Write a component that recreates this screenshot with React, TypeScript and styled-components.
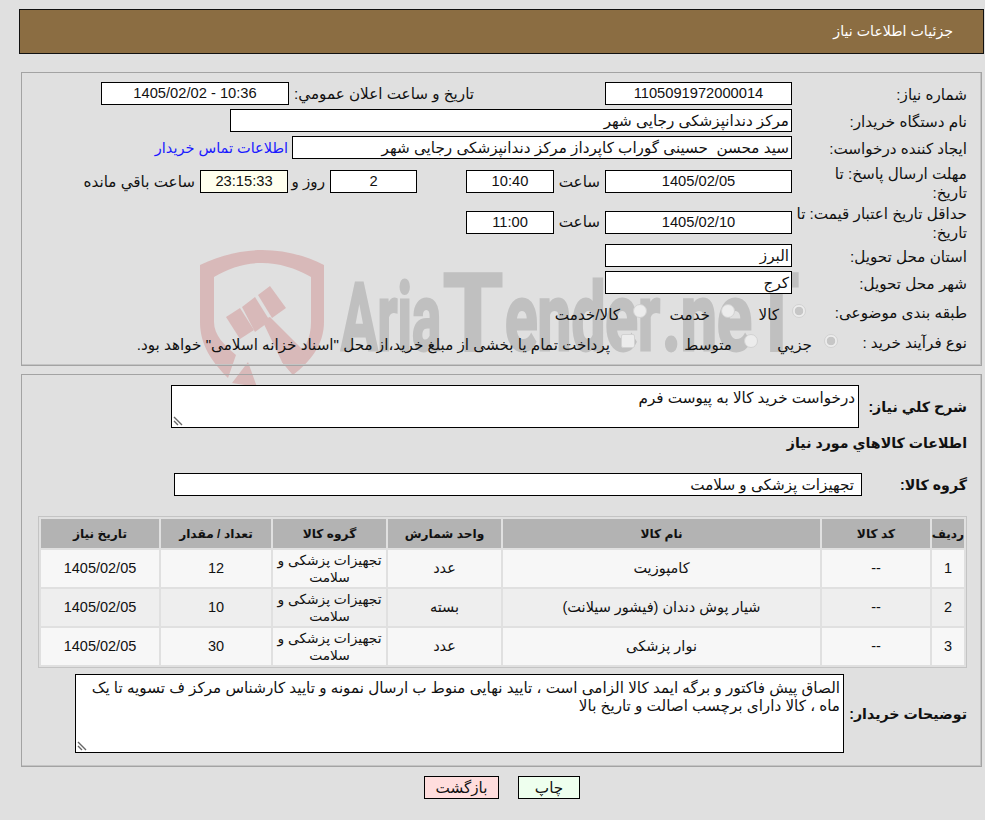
import React from 'react';
import styled, { createGlobalStyle } from 'styled-components';

const GlobalStyle = createGlobalStyle`
  html, body {
    margin: 0;
    padding: 0;
    background: #e0e0e0;
  }
  body {
    font-family: "Liberation Sans", "DejaVu Sans", sans-serif;
    font-size: 15.2px;
    color: #111;
  }
`;

const Page = styled.div`
  position: relative;
  direction: rtl;
  width: 985px;
  height: 820px;
  box-sizing: border-box;
  padding: 9px 0 0 0;
  overflow: hidden;
`;

const Watermark = styled.svg`
  position: absolute;
  left: 0;
  top: 0;
  width: 985px;
  height: 820px;
  z-index: 0;
`;

const TitleBar = styled.div`
  position: relative;
  z-index: 1;
  box-sizing: border-box;
  height: 45px;
  margin: 0 1px 0 19px;
  padding-right: 30px;
  background: #8b6d42;
  border: 1px solid #111;
  color: #fff;
  line-height: 43px;
  font-size: 14.2px;
`;

const Panel = styled.div<{ $top: number; $height: number; $pad: number }>`
  position: relative;
  z-index: 1;
  box-sizing: border-box;
  height: ${(p) => p.$height}px;
  margin: ${(p) => p.$top}px 3px 0 21px;
  border: 1px solid #a3a3a3;
  box-shadow: inset -1px -1px 0 #c4c4c4;
  padding: ${(p) => p.$pad}px 14px 0 0;
`;

const Row = styled.div<{ $height?: number; $gap?: number }>`
  display: flex;
  align-items: center;
  height: ${(p) => p.$height ?? 23}px;
  margin-bottom: ${(p) => p.$gap ?? 4}px;
`;

const Label = styled.div`
  box-sizing: border-box;
  flex: 0 0 175px;
  padding-top: 2px;
  line-height: 19px;
  white-space: nowrap;
`;

const Field = styled.div<{ $w: number; $center?: boolean; $bg?: string; $mr?: number; $pr?: number; $ltr?: boolean }>`
  box-sizing: border-box;
  flex: 0 0 ${(p) => p.$w}px;
  height: 23px;
  margin-right: ${(p) => p.$mr ?? 0}px;
  padding: 0 ${(p) => p.$pr ?? 2}px 0 2px;
  background: ${(p) => p.$bg ?? '#fff'};
  border: 1px solid #000;
  direction: ${(p) => (p.$ltr ? 'ltr' : 'rtl')};
  font-size: ${(p) => (p.$center ? '14.7px' : 'inherit')};
  line-height: 21px;
  white-space: pre;
  overflow: hidden;
  text-align: ${(p) => (p.$center ? 'center' : 'right')};
`;

const Note = styled.span<{ $mr: number; $w?: number }>`
  flex: 0 0 ${(p) => (p.$w ? `${p.$w}px` : 'auto')};
  margin-right: ${(p) => p.$mr}px;
  white-space: nowrap;
`;

const ContactLink = styled.a`
  margin-right: 4px;
  color: #1a1aff;
  font-size: 14.5px;
  white-space: nowrap;
`;

const Radio = styled.span<{ $on?: boolean; $mr: number }>`
  box-sizing: border-box;
  flex: 0 0 14px;
  width: 14px;
  height: 14px;
  margin-right: ${(p) => p.$mr}px;
  margin-top: -1px;
  border: 1px solid #d2d2d2;
  border-radius: 50%;
  background: ${(p) =>
    p.$on ? 'radial-gradient(circle, #c6c6c6 0 4px, #ececec 4.6px)' : '#ececec'};
`;

const Check = styled.span<{ $mr: number }>`
  box-sizing: border-box;
  flex: 0 0 14px;
  width: 14px;
  height: 14px;
  margin-right: ${(p) => p.$mr}px;
  margin-top: -1px;
  border: 1px solid #d2d2d2;
  border-radius: 2px;
  background: #ececec;
`;

const Option = styled.span<{ $mr: number; $w?: number }>`
  flex: 0 0 ${(p) => (p.$w ? `${p.$w}px` : 'auto')};
  margin-top: 8px;
  margin-right: ${(p) => p.$mr}px;
  white-space: nowrap;
`;

const BoldLabel = styled.div<{ $w: number }>`
  flex: 0 0 ${(p) => p.$w}px;
  font-weight: 700;
  font-size: 14.2px;
  white-space: nowrap;
`;

const Area = styled.div<{ $w: number; $h: number; $pt: number }>`
  position: relative;
  box-sizing: border-box;
  width: ${(p) => p.$w}px;
  height: ${(p) => p.$h}px;
  padding: ${(p) => p.$pt}px 3px 0;
  background: #fff;
  border: 1px solid #000;
  line-height: 18px;
`;

const Grip = styled.svg`
  position: absolute;
  left: 1px;
  bottom: 1px;
  width: 10px;
  height: 10px;
`;

const GoodsTable = styled.table`
  width: 929px;
  margin: 0 0 6px 1px;
  border: 1px solid #c4c4c4;
  border-spacing: 2px;
  border-collapse: separate;
  table-layout: fixed;
`;

const Th = styled.th<{ $w: number }>`
  width: ${(p) => p.$w}px;
  height: 29px;
  padding: 0;
  background: #b3b3b3;
  font-size: 12.2px;
  font-weight: 700;
  white-space: nowrap;
`;

const Td = styled.td<{ $alt?: boolean; $size?: number }>`
  height: 37px;
  padding: 0;
  background: ${(p) => (p.$alt ? '#eeeeee' : '#f7f7f7')};
  font-size: ${(p) => p.$size ?? 14.5}px;
  text-align: center;
  line-height: 17px;
`;

const Buttons = styled.div`
  position: relative;
  z-index: 1;
  display: flex;
  justify-content: center;
  gap: 19px;
  margin: 9px 0 0 0;
  padding-left: 19px;
`;

const Button = styled.button<{ $bg: string; $w: number }>`
  box-sizing: border-box;
  width: ${(p) => p.$w}px;
  height: 23px;
  padding: 0;
  background: ${(p) => p.$bg};
  border: 1px solid #000;
  font: inherit;
  color: #111;
`;

const rows = [
  { n: '1', name: 'کامپوزیت', unit: 'عدد', qty: '12' },
  { n: '2', name: 'شیار پوش دندان (فیشور سیلانت)', unit: 'بسته', qty: '10' },
  { n: '3', name: 'نوار پزشکی', unit: 'عدد', qty: '30' },
];

// logo word, split so each piece keeps its own place and stretch
const logoParts = [
  { t: 'Aria', x: 341, w: 100, size: 94 },
  { t: 'T', x: 443, w: 60, size: 108 },
  { t: 'ender', x: 505, w: 155, size: 94 },
  { t: '.ne', x: 662, w: 90, size: 94 },
  { t: 'T', x: 754, w: 45, size: 108 },
];

const ResizeGrip = () => (
  <Grip viewBox="0 0 10 10">
    <path d="M1 1L9 9M1 5L5 9" stroke="#666" strokeWidth="1.4" fill="none" />
  </Grip>
);

export default function App() {
  return (
    <>
      <GlobalStyle />
      <Page>
        <Watermark viewBox="0 0 985 820">
          <g fill="#d8b9b9">
            <path d="M228 378C212 362 200 345 200 322V265C222 255 242 250 262 250C284 250 304 255 324 265V322C324 345 310 362 293 375L282 362L293 360C305 350 311 338 311 322V277C295 268 279 263 262 263C245 263 229 268 214 277V322C214 335 224 345 236 355Z" />
            <path d="M248 362L232 383L257 387Z" />
            <path d="M226 317L240 308L254 330L240 339Z" />
            <path d="M242 307L255 297L270 321L255 332Z" />
            <path d="M258 295L270 286L286 308L272 318Z" />
            <path d="M262 320L270 317L305 352L293 375L282 362Z" />
          </g>
          {logoParts.map((p) => (
            <text
              key={p.x}
              x={p.x}
              y="350"
              fontFamily="Roboto, sans-serif"
              fontWeight="700"
              fontSize={p.size}
              fill="#c0c0c0"
              stroke="#c0c0c0"
              strokeWidth="3"
              textLength={p.w}
              lengthAdjust="spacingAndGlyphs"
              direction="ltr"
            >
              {p.t}
            </text>
          ))}
        </Watermark>
        <TitleBar>جزئیات اطلاعات نیاز</TitleBar>
        <Panel $top={18} $height={294} $pad={9}>
          <Row>
            <Label>شماره نیاز:</Label>
            <Field $w={187} $center>1105091972000014</Field>
            <Note $mr={131}>تاریخ و ساعت اعلان عمومي:</Note>
            <Field $w={188} $center $ltr $mr={5}>1405/02/02 - 10:36</Field>
          </Row>
          <Row>
            <Label>نام دستگاه خریدار:</Label>
            <Field $w={562}>مرکز دندانپزشکی رجایی شهر</Field>
          </Row>
          <Row>
            <Label>ایجاد کننده درخواست:</Label>
            <Field $w={500}>سید محسن  حسینی گوراب کاپرداز مرکز دندانپزشکی رجایی شهر</Field>
            <ContactLink>اطلاعات تماس خریدار</ContactLink>
          </Row>
          <Row $height={37}>
            <Label>مهلت ارسال پاسخ: تا<br />تاریخ:</Label>
            <Field $w={187} $center>1405/02/05</Field>
            <Note $mr={5} $w={46}>ساعت</Note>
            <Field $w={88} $center>10:40</Field>
            <Field $w={87} $center $mr={49}>2</Field>
            <Note $mr={5} $w={37}>روز و</Note>
            <Field $w={88} $center $bg="#ffffee">23:15:33</Field>
            <Note $mr={5}>ساعت باقي مانده</Note>
          </Row>
          <Row $height={36}>
            <Label>حداقل تاریخ اعتبار قیمت: تا<br />تاریخ:</Label>
            <Field $w={187} $center>1405/02/10</Field>
            <Note $mr={5} $w={46}>ساعت</Note>
            <Field $w={88} $center>11:00</Field>
          </Row>
          <Row>
            <Label>استان محل تحویل:</Label>
            <Field $w={187}>البرز</Field>
          </Row>
          <Row>
            <Label>شهر محل تحویل:</Label>
            <Field $w={187}>کرج</Field>
          </Row>
          <Row $height={26}>
            <Label>طبقه بندی موضوعی:</Label>
            <Radio $on $mr={-14} />
            <Option $mr={13} $w={44}>کالا</Option>
            <Radio $mr={0} />
            <Option $mr={11} $w={63}>خدمت</Option>
            <Radio $mr={0} />
            <Option $mr={13}>کالا/خدمت</Option>
          </Row>
          <Row $height={26}>
            <Label>نوع فرآیند خرید :</Label>
            <Radio $on $mr={-46} />
            <Option $mr={12} $w={54}>جزيي</Option>
            <Radio $mr={0} />
            <Option $mr={12} $w={97}>متوسط</Option>
            <Check $mr={0} />
            <Option $mr={11}>پرداخت تمام یا بخشی از مبلغ خرید،از محل "اسناد خزانه اسلامی" خواهد بود.</Option>
          </Row>
        </Panel>
        <Panel $top={8} $height={393} $pad={10}>
          <Row $height={43} $gap={0}>
            <BoldLabel $w={108}>شرح کلي نیاز:</BoldLabel>
            <Area $w={688} $h={43} $pt={3}>
              درخواست خرید کالا به پیوست فرم
              <ResizeGrip />
            </Area>
          </Row>
          <Row $height={30} $gap={15}>
            <BoldLabel $w={300}>اطلاعات کالاهاي مورد نیاز</BoldLabel>
          </Row>
          <Row $gap={20}>
            <BoldLabel $w={105}>گروه کالا:</BoldLabel>
            <Field $w={688} $pr={7}>تجهیزات پزشکی و سلامت</Field>
          </Row>
          <GoodsTable>
            <thead>
              <tr>
                <Th $w={32}>ردیف</Th>
                <Th $w={108}>کد کالا</Th>
                <Th $w={317}>نام کالا</Th>
                <Th $w={113}>واحد شمارش</Th>
                <Th $w={113}>گروه کالا</Th>
                <Th $w={110}>تعداد / مقدار</Th>
                <Th $w={118}>تاریخ نیاز</Th>
              </tr>
            </thead>
            <tbody>
              {rows.map((r, i) => (
                <tr key={r.n}>
                  <Td $alt={i === 1}>{r.n}</Td>
                  <Td $alt={i === 1}>--</Td>
                  <Td $alt={i === 1}>{r.name}</Td>
                  <Td $alt={i === 1}>{r.unit}</Td>
                  <Td $alt={i === 1} $size={13.8}>تجهیزات پزشکی و سلامت</Td>
                  <Td $alt={i === 1}>{r.qty}</Td>
                  <Td $alt={i === 1}>1405/02/05</Td>
                </tr>
              ))}
            </tbody>
          </GoodsTable>
          <Row $height={79} $gap={0}>
            <BoldLabel $w={123}>توضیحات خریدار:</BoldLabel>
            <Area $w={769} $h={79} $pt={4}>
              الصاق پیش فاکتور و برگه ایمد کالا الزامی است ، تایید نهایی منوط ب ارسال نمونه و تایید کارشناس مرکز ف تسویه تا یک ماه ، کالا دارای برچسب اصالت و تاریخ بالا
              <ResizeGrip />
            </Area>
          </Row>
        </Panel>
        <Buttons>
          <Button $bg="#eeffee" $w={62}>چاپ</Button>
          <Button $bg="#ffdddd" $w={75}>بازگشت</Button>
        </Buttons>
      </Page>
    </>
  );
}
